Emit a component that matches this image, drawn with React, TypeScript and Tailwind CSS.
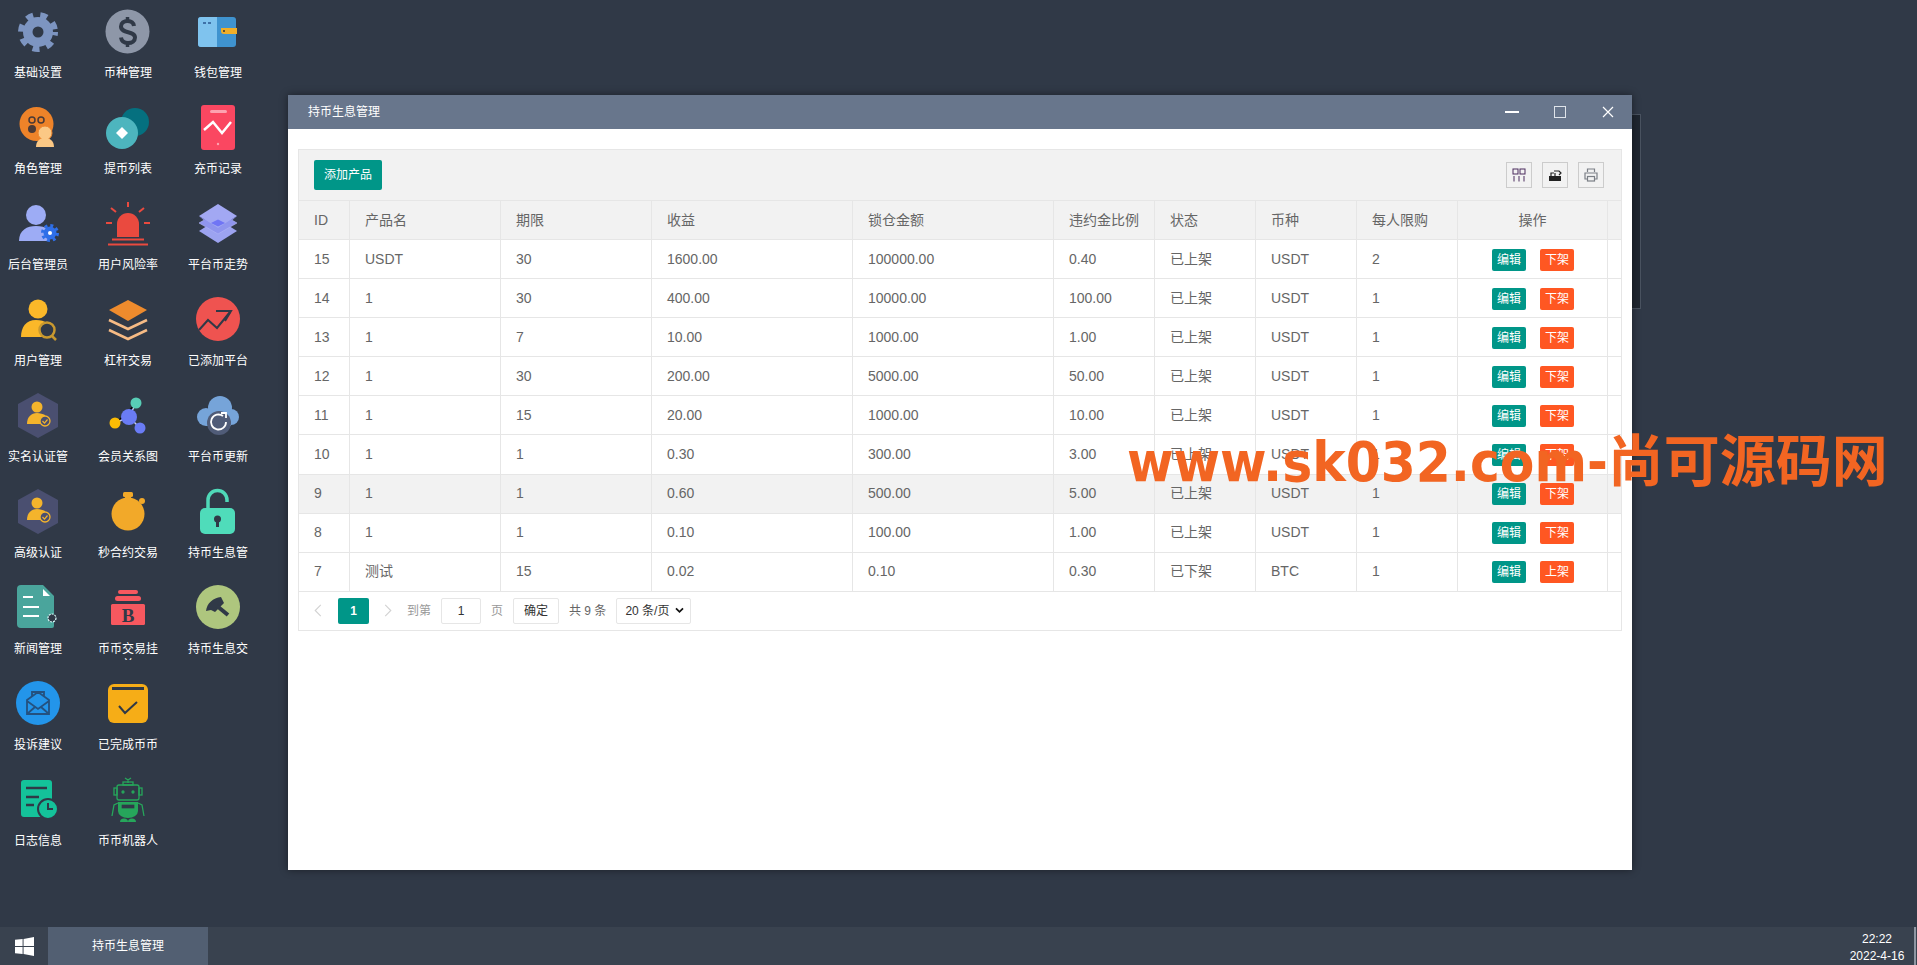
import type { ReactNode } from "react";

const FONT = "font-['Liberation_Sans','Noto_Sans_CJK_SC',sans-serif]";

const Gear = () => (
  <svg viewBox="0 0 48 48" className="h-12 w-12">
    <circle cx="24" cy="24" r="15" fill="#7d95c1" />
    <circle cx="24" cy="24" r="17" fill="none" stroke="#7d95c1" strokeWidth="6" strokeDasharray="7 7.240" strokeDashoffset="3.500" />
    <circle cx="24" cy="24" r="5.500" fill="#303947" />
  </svg>
);

const DollarCoin = () => (
  <svg viewBox="0 0 48 48" className="h-12 w-12">
    <circle cx="23.500" cy="23.500" r="22" fill="#8e97a8" />
    <path d="M30 18c-.5-3-3-5-6.500-5s-6.500 2-6.500 5.500c0 7.500 14 4 14 11 0 3.500-3 5.500-7 5.500s-6.500-2-7-5.500" fill="none" stroke="#303947" strokeWidth="4" />
    <path d="M23.500 9v5M23.500 33v6" stroke="#303947" strokeWidth="3.500" />
  </svg>
);

const Wallet = () => (
  <svg viewBox="0 0 48 48" className="h-12 w-12">
    <rect x="4" y="9" width="38" height="30" rx="3" fill="#3f93cf" />
    <path d="M7 9h16v30H7a3 3 0 0 1-3-3V12a3 3 0 0 1 3-3z" fill="#7fc3ee" />
    <rect x="14" y="14" width="3" height="2" fill="#3f72a8" />
    <rect x="9" y="14" width="3" height="2" fill="#3f72a8" />
    <path d="M27 20h16v6H30a3 3 0 0 1-3-3z" fill="#f0ae28" />
    <circle cx="30" cy="23" r="1" fill="#333" />
  </svg>
);

const RoleCircle = () => (
  <svg viewBox="0 0 48 48" className="h-12 w-12">
    <circle cx="22.500" cy="20" r="17" fill="#ee8329" />
    <circle cx="18" cy="16" r="3" fill="none" stroke="#4b3a36" strokeWidth="1.500" />
    <circle cx="27" cy="16" r="3" fill="none" stroke="#4b3a36" strokeWidth="1.500" />
    <circle cx="18" cy="25" r="4" fill="#4b3a36" />
    <circle cx="31" cy="29" r="7" fill="#fbc885" stroke="#ee8329" strokeWidth="1" />
    <path d="M22 43c0-6 4-9 9-9s9 3 9 9z" fill="#fbc885" />
  </svg>
);

const Coins = () => (
  <svg viewBox="0 0 48 48" className="h-12 w-12">
    <circle cx="31" cy="18" r="14" fill="#05707f" />
    <circle cx="18" cy="29" r="16" fill="#4db5be" />
    <path d="M18 23l6 6-6 6-6-6z" fill="#fff" />
  </svg>
);

const Phone = () => (
  <svg viewBox="0 0 48 48" className="h-12 w-12">
    <rect x="7" y="1" width="34" height="45" rx="3" fill="#fa4761" />
    <rect x="16" y="6" width="17" height="3" rx="1.500" fill="#fda2b0" />
    <path d="M10 26l9-8 9 11 9-11" fill="none" stroke="#fff" strokeWidth="2.500" />
    <circle cx="24" cy="40" r="1.200" fill="#fda2b0" />
  </svg>
);

const AdminUser = () => (
  <svg viewBox="0 0 48 48" className="h-12 w-12">
    <circle cx="22" cy="15" r="10" fill="#9dacf5" />
    <path d="M5 41c0-11 8-15 17-15 5 0 9 1 12 3v12z" fill="#9dacf5" />
    <circle cx="36" cy="33" r="6.500" fill="#2f6fe8" />
    <circle cx="36" cy="33" r="7.500" fill="none" stroke="#2f6fe8" strokeWidth="3" strokeDasharray="3 2.900" />
    <circle cx="36" cy="33" r="2" fill="#fff" />
  </svg>
);

const Alarm = () => (
  <svg viewBox="0 0 48 48" className="h-12 w-12" stroke="#ea4a3f">
    <path d="M13 37V24a11 11 0 0 1 22 0v13z" fill="#ea4a3f" stroke="none" />
    <path d="M8 39.500h32M4 44.500h40" strokeWidth="2" />
    <path d="M24 2v5M7 8l5 4M40 8l-5 4M2 23h6M40 23h6" strokeWidth="2" />
  </svg>
);

const Layers = () => (
  <svg viewBox="0 0 48 48" className="h-12 w-12">
    <path d="M5 31l19-12 19 12-19 12z" fill="#9ca3f0" />
    <path d="M5 23l19-11 19 11-19 11z" fill="#8f95ee" stroke="#b1b6f6" strokeWidth=".6" />
    <path d="M5 16L24 4l19 12-19 12z" fill="#a2a8f3" />
    <path d="M5 16l19 12 19-12-8 7-11 5-11-5z" fill="#8f95ee" />
    <path d="M17 23l7-3.500 7 3.500-7 3.500z" fill="#7075f5" />
  </svg>
);

const UserSearch = () => (
  <svg viewBox="0 0 48 48" className="h-12 w-12">
    <circle cx="24" cy="13" r="9.500" fill="#fbb829" />
    <path d="M7 41c0-10 5-17 15-17 5 0 8 1 11 3v14z" fill="#fbb829" />
    <circle cx="33" cy="34" r="7.500" fill="#303947" stroke="#c9992f" strokeWidth="2.500" />
    <path d="M38 40l4 4" stroke="#c9992f" strokeWidth="2.500" />
  </svg>
);

const LayerStack = () => (
  <svg viewBox="0 0 48 48" className="h-12 w-12">
    <path d="M24 4l19 10-19 11L5 14z" fill="#ee8b2d" />
    <path d="M5 24l19 9 19-9M5 34l19 9 19-9" fill="none" stroke="#f6bb85" strokeWidth="2.500" />
  </svg>
);

const TrendCircle = () => (
  <svg viewBox="0 0 48 48" className="h-12 w-12">
    <circle cx="24" cy="23" r="22" fill="#ef5350" />
    <path d="M5 34l9-10 9 8 13-16" fill="none" stroke="#303947" strokeWidth="2" />
    <path d="M22 15h15l-6 10" fill="none" stroke="#303947" strokeWidth="2" />
  </svg>
);

const HexUser = () => (
  <svg viewBox="0 0 48 48" className="h-12 w-12">
    <path d="M24 1l20 11v23L24 46 4 35V12z" fill="#4a4f70" />
    <circle cx="23" cy="15" r="5.500" fill="#f4b42c" />
    <path d="M13 32c0-7 4-11 10-11 3 0 6 1 8 2v9z" fill="#f4b42c" />
    <circle cx="31" cy="29" r="5" fill="#4a4f70" stroke="#f4b42c" strokeWidth="1.300" />
    <path d="M28.500 29l2 2.200 3-3.700" fill="none" stroke="#f4b42c" strokeWidth="1.200" />
  </svg>
);

const Relations = () => (
  <svg viewBox="0 0 48 48" className="h-12 w-12">
    <path d="M11 31l14-6 7-14M25 25l11 11" stroke="#c5cdf5" strokeWidth="1.500" />
    <circle cx="32" cy="11" r="5.500" fill="#58cdb6" />
    <circle cx="25" cy="25" r="8" fill="#6a7cf5" />
    <circle cx="11" cy="31" r="5.500" fill="#fbbc05" />
    <circle cx="36" cy="36" r="5.500" fill="#6a7cf5" />
  </svg>
);

const CloudRefresh = () => (
  <svg viewBox="0 0 48 48" className="h-12 w-12">
    <g fill="#76a4d9">
      <circle cx="12" cy="25" r="9" />
      <circle cx="26" cy="16" r="12" />
      <circle cx="37" cy="25" r="8" />
      <rect x="12" y="22" width="25" height="12" />
    </g>
    <circle cx="25" cy="31" r="12" fill="#505c78" />
    <path d="M32 30a7.500 7.500 0 1 1-3-6" fill="none" stroke="#fff" strokeWidth="1.800" />
    <path d="M27 21h5v5" fill="none" stroke="#fff" strokeWidth="1.800" />
  </svg>
);

const Stopwatch = () => (
  <svg viewBox="0 0 48 48" className="h-12 w-12">
    <rect x="19" y="4" width="10" height="5" rx="1.500" fill="#f2a929" />
    <rect x="21" y="8" width="6" height="4" fill="#f2a929" />
    <circle cx="38" cy="13" r="3" fill="#f2a929" />
    <circle cx="24" cy="26" r="16.500" fill="#f2a929" />
  </svg>
);

const Lock = () => (
  <svg viewBox="0 0 48 48" className="h-12 w-12">
    <path d="M14 22V12a9.500 9.500 0 0 1 19 0v2" fill="none" stroke="#4fd9b8" strokeWidth="3.500" />
    <rect x="6" y="20" width="35" height="26" rx="5" fill="#4fdcba" />
    <circle cx="23.500" cy="31" r="3.500" fill="#303947" />
    <rect x="22" y="32" width="3" height="7" fill="#303947" />
  </svg>
);

const NewsDoc = () => (
  <svg viewBox="0 0 48 48" className="h-12 w-12">
    <path d="M7 1h22l11 11v30a2 2 0 0 1-2 2H7a4 4 0 0 1-4-4V5a4 4 0 0 1 4-4z" fill="#4aa59c" />
    <path d="M29 5l7 7h-7z" fill="#fff" />
    <path d="M9 13h10M9 23h16M9 32h16" stroke="#fff" strokeWidth="2" />
    <circle cx="38" cy="34" r="4" fill="#303947" stroke="#dff" strokeWidth="1.200" strokeDasharray="2 1" />
  </svg>
);

const BtcBag = () => (
  <svg viewBox="0 0 48 48" className="h-12 w-12">
    <rect x="14" y="6" width="20" height="4" rx="2" fill="#f7585f" />
    <rect x="11" y="12" width="26" height="5" rx="2.500" fill="#f7585f" />
    <rect x="7" y="20" width="34" height="21" rx="1.500" fill="#f7585f" />
    <text x="24" y="38" textAnchor="middle" fontSize="19" fontWeight="700" fontFamily="Liberation Serif, serif" fill="#303947">B</text>
  </svg>
);

const HammerCoin = () => (
  <svg viewBox="0 0 48 48" className="h-12 w-12">
    <circle cx="24" cy="23" r="22" fill="#aec67e" />
    <path d="M12 27c1-8 7-13 15-14l3 6-9 9-4-2z" fill="#303947" />
    <path d="M23 22l11 9" stroke="#303947" strokeWidth="4" />
  </svg>
);

const MailCoin = () => (
  <svg viewBox="0 0 48 48" className="h-12 w-12">
    <circle cx="24" cy="23" r="22" fill="#2395ea" />
    <path d="M13 20l11-8 11 8v14H13zM13 21l11 8 11-8M13 34l8-7M35 34l-8-7M18 17v-5h12v5" fill="none" stroke="#24517f" strokeWidth="1.800" />
  </svg>
);

const DoneCard = () => (
  <svg viewBox="0 0 48 48" className="h-12 w-12">
    <rect x="4" y="4" width="40" height="39" rx="6" fill="#f6ad17" />
    <path d="M8 8.500h32" stroke="#303947" strokeWidth="3" />
    <path d="M15 26l6 7 12-11" fill="none" stroke="#303947" strokeWidth="2" />
  </svg>
);

const LogDoc = () => (
  <svg viewBox="0 0 48 48" className="h-12 w-12">
    <rect x="7" y="4" width="31" height="37" rx="3" fill="#14c29a" />
    <path d="M12 12h21M12 21h13M12 29h8" stroke="#303947" strokeWidth="2.500" />
    <circle cx="34" cy="33" r="10" fill="#14c29a" stroke="#303947" strokeWidth="2" />
    <path d="M34 27v6h5" fill="none" stroke="#303947" strokeWidth="2" />
  </svg>
);

const Robot = () => (
  <svg viewBox="0 0 48 48" className="h-12 w-12" fill="none" stroke="#26a65b" strokeWidth="1.300">
    <path d="M24 3v4M21 2l3 2 3-2" />
    <rect x="19" y="6" width="10" height="3" />
    <rect x="13" y="9" width="22" height="15" rx="2" />
    <rect x="10" y="12" width="3" height="7" />
    <rect x="35" y="12" width="3" height="7" />
    <circle cx="19" cy="16" r="1" fill="#26a65b" />
    <circle cx="29" cy="16" r="1" fill="#26a65b" />
    <path d="M14 26h20v9a10 7 0 0 1-20 0z" fill="#26a65b" stroke="none" />
    <rect x="17" y="28" width="14" height="5" fill="#303947" />
    <path d="M14 27l-4 2-2 11M34 27l4 2 2 11" />
    <path d="M16 46a4 3.500 0 0 1 8 0zM24 46a4 3.500 0 0 1 8 0z" fill="#26a65b" stroke="none" />
  </svg>
);

const Windows = () => (
  <svg viewBox="0 0 20 20" className="h-[19px] w-[19px]">
    <path d="M0 3l8-1v7.500H0zM9 2l11-2v9.500H9zM0 10.500h8V18l-8-1zM9 10.500h11V20L9 18z" fill="#fff" />
  </svg>
);

const desktopItems: { icon: ReactNode; label: string }[] = [
  { icon: <Gear />, label: "基础设置" },
  { icon: <RoleCircle />, label: "角色管理" },
  { icon: <AdminUser />, label: "后台管理员" },
  { icon: <UserSearch />, label: "用户管理" },
  { icon: <HexUser />, label: "实名认证管" },
  { icon: <HexUser />, label: "高级认证" },
  { icon: <NewsDoc />, label: "新闻管理" },
  { icon: <MailCoin />, label: "投诉建议" },
  { icon: <LogDoc />, label: "日志信息" },
  { icon: <DollarCoin />, label: "币种管理" },
  { icon: <Coins />, label: "提币列表" },
  { icon: <Alarm />, label: "用户风险率" },
  { icon: <LayerStack />, label: "杠杆交易" },
  { icon: <Relations />, label: "会员关系图" },
  { icon: <Stopwatch />, label: "秒合约交易" },
  { icon: <BtcBag />, label: "币币交易挂单" },
  { icon: <DoneCard />, label: "已完成币币" },
  { icon: <Robot />, label: "币币机器人" },
  { icon: <Wallet />, label: "钱包管理" },
  { icon: <Phone />, label: "充币记录" },
  { icon: <Layers />, label: "平台币走势" },
  { icon: <TrendCircle />, label: "已添加平台" },
  { icon: <CloudRefresh />, label: "平台币更新" },
  { icon: <Lock />, label: "持币生息管" },
  { icon: <HammerCoin />, label: "持币生息交" },
];

const headers = ["ID", "产品名", "期限", "收益", "锁仓金额", "违约金比例", "状态", "币种", "每人限购"];

const rows = [
  ["15", "USDT", "30", "1600.00", "100000.00", "0.40", "已上架", "USDT", "2"],
  ["14", "1", "30", "400.00", "10000.00", "100.00", "已上架", "USDT", "1"],
  ["13", "1", "7", "10.00", "1000.00", "1.00", "已上架", "USDT", "1"],
  ["12", "1", "30", "200.00", "5000.00", "50.00", "已上架", "USDT", "1"],
  ["11", "1", "15", "20.00", "1000.00", "10.00", "已上架", "USDT", "1"],
  ["10", "1", "1", "0.30", "300.00", "3.00", "已上架", "USDT", "1"],
  ["9", "1", "1", "0.60", "500.00", "5.00", "已上架", "USDT", "1"],
  ["8", "1", "1", "0.10", "100.00", "1.00", "已上架", "USDT", "1"],
  ["7", "测试", "15", "0.02", "0.10", "0.30", "已下架", "BTC", "1"],
];

const gridCols = "grid grid-cols-[51px_151px_151px_201px_201px_101px_101px_101px_101px_150px_14px]";
const cell = "flex items-center border-r border-[#e6e6e6] px-[15px]";

export default function App() {
  return (
    <div className={`relative flex h-[965px] w-[1917px] flex-col overflow-hidden bg-[#303947] ${FONT}`}>
      <main className="relative flex-1">
        <div className="-ml-[7px] grid w-[270px] grid-flow-col grid-cols-[repeat(3,90px)] grid-rows-[repeat(9,96px)] pt-[8px]">
          {desktopItems.map((item, i) => (
            <div key={i} className="flex h-[96px] w-[90px] flex-col items-center">
              {item.icon}
              <span className="mt-[9px] h-[19px] w-[66px] overflow-hidden text-center text-[12px] leading-[16px] text-white">
                {item.label}
              </span>
            </div>
          ))}
        </div>

        {/* window sitting behind the active one */}
        <div className="absolute left-[320px] top-[114px] h-[195px] w-[1321px] border-r border-b border-t border-[#4a5360] bg-[#1f2630]" />

        <section className="absolute left-[288px] top-[95px] flex h-[775px] w-[1344px] flex-col bg-white shadow-[0_0_8px_rgba(0,0,0,0.45)]">
          <header className="flex h-[34px] items-center justify-between bg-[#68768c] pl-5 text-white">
            <span className="text-[12px]">持币生息管理</span>
            <div className="flex items-center">
              <span className="flex h-[34px] w-12 items-center justify-center">
                <span className="h-[2px] w-[14px] bg-white" />
              </span>
              <span className="flex h-[34px] w-12 items-center justify-center">
                <span className="h-[12px] w-[12px] border-[1.5px] border-[#dfe4ea]" />
              </span>
              <span className="flex h-[34px] w-12 items-center justify-center">
                <svg viewBox="0 0 12 12" className="h-3 w-3" stroke="#fff" strokeWidth="1.200"><path d="M1 1l10 10M11 1L1 11" /></svg>
              </span>
            </div>
          </header>

          <div className="flex-1 px-[10px] pt-5">
            <div className="border border-[#e6e6e6]">
              <div className="flex h-[50px] items-center justify-between bg-[#f2f2f2] pl-[15px] pr-[17px]">
                <button className="h-[30px] rounded-[2px] bg-[#009688] px-[10px] text-[12px] text-white">添加产品</button>
                <div className="flex gap-[10px]">
                  <span className="flex h-[26px] w-[26px] items-center justify-center border border-[#ccc]">
                    <svg viewBox="0 0 14 14" className="h-[14px] w-[14px]" fill="none" stroke="#4a2a5c" strokeWidth="1"><rect x="1" y="1" width="5" height="5" /><rect x="8" y="1" width="5" height="5" /><path d="M2 8v5.500M7 8v5.500M12 8v5.500" /></svg>
                  </span>
                  <span className="flex h-[26px] w-[26px] items-center justify-center border border-[#ccc]">
                    <svg viewBox="0 0 14 14" className="h-[14px] w-[14px]"><path d="M1 8h12v5H1z" fill="#222" /><path d="M3 8V5h3M6 3h5l2 2-2 2M7 5v3" fill="none" stroke="#222" strokeWidth="1.200" /></svg>
                  </span>
                  <span className="flex h-[26px] w-[26px] items-center justify-center border border-[#ccc]">
                    <svg viewBox="0 0 14 14" className="h-[14px] w-[14px]" fill="none" stroke="#7b7f86" strokeWidth="1.200"><path d="M3.500 4V1h7v3M3 11H1V5h12v6h-2" /><rect x="3.500" y="8.500" width="7" height="4.500" /></svg>
                  </span>
                </div>
              </div>

              <div className={`${gridCols} h-[39px] border-t border-[#e6e6e6] bg-[#f2f2f2] text-[14px] text-[#666]`}>
                {headers.map((h) => (
                  <div key={h} className={cell}>{h}</div>
                ))}
                <div className={`${cell} justify-center`}>操作</div>
                <div />
              </div>

              {rows.map((row, i) => (
                <div
                  key={row[0]}
                  className={`${gridCols} h-[39.100px] border-t border-[#e6e6e6] text-[14px] text-[#666] ${row[0] === "9" ? "bg-[#f2f2f2]" : "bg-white"}`}
                >
                  {row.map((v, j) => (
                    <div key={j} className={cell}>{v}</div>
                  ))}
                  <div className={`${cell} justify-center gap-[14px] pl-4 pt-[1px]`}>
                    <span className="rounded-[2px] bg-[#009688] px-[5px] text-[12px] leading-[22px] text-white">编辑</span>
                    <span className="rounded-[2px] bg-[#ff5722] px-[5px] text-[12px] leading-[22px] text-white">{i === 8 ? "上架" : "下架"}</span>
                  </div>
                  <div />
                </div>
              ))}

              <div className="flex h-[39px] items-center border-t border-[#e6e6e6] pl-[15px] text-[12px] text-[#666]">
                <svg viewBox="0 0 8 14" className="h-[13px] w-[8px]" fill="none" stroke="#d2d2d2" strokeWidth="1.200"><path d="M7 1L1 7l6 6" /></svg>
                <span className="ml-[16px] flex h-[26px] w-[31px] items-center justify-center rounded-[2px] bg-[#009688] font-bold text-white">1</span>
                <svg viewBox="0 0 8 14" className="ml-[15px] h-[13px] w-[8px]" fill="none" stroke="#d2d2d2" strokeWidth="1.200"><path d="M1 1l6 6-6 6" /></svg>
                <span className="ml-[15px] text-[#999]">到第</span>
                <span className="ml-[10px] flex h-[26px] w-10 items-center justify-center rounded-[2px] border border-[#e6e6e6] text-[#333]">1</span>
                <span className="ml-[10px] text-[#999]">页</span>
                <span className="ml-[10px] flex h-[26px] w-[46px] items-center justify-center rounded-[2px] border border-[#e6e6e6] text-[#333]">确定</span>
                <span className="ml-[10px]">共 9 条</span>
                <span className="ml-[10px] flex h-[26px] w-[75px] items-center justify-between rounded-[2px] border border-[#e6e6e6] pl-2 pr-[6px] text-[#333]">
                  20 条/页
                  <svg viewBox="0 0 10 8" className="h-[7px] w-[9px]" fill="none" stroke="#111" strokeWidth="2"><path d="M1 1.500l4 4 4-4" /></svg>
                </span>
              </div>
            </div>
          </div>
        </section>

        <div className="absolute left-[1127px] top-[424px] whitespace-nowrap font-['DejaVu_Sans_Condensed','Noto_Sans_CJK_SC',sans-serif] text-[56px] font-bold leading-[76px] text-[#f26522]">
          www.sk032.com-尚可源码网
        </div>
      </main>

      <footer className="flex h-[38px] items-center bg-[#39424f]">
        <span className="flex h-full w-12 items-center justify-center pl-[1px]"><Windows /></span>
        <span className="flex h-full w-40 items-center justify-center bg-[#525f72] text-[12px] text-white">持币生息管理</span>
        <div className="ml-auto mr-[1px] flex h-full w-[76px] flex-col items-center justify-center border-r-[2px] border-[#8e96a2] pt-[3px] text-[12px] leading-[17px] text-white">
          <span>22:22</span>
          <span>2022-4-16</span>
        </div>
      </footer>
    </div>
  );
}
